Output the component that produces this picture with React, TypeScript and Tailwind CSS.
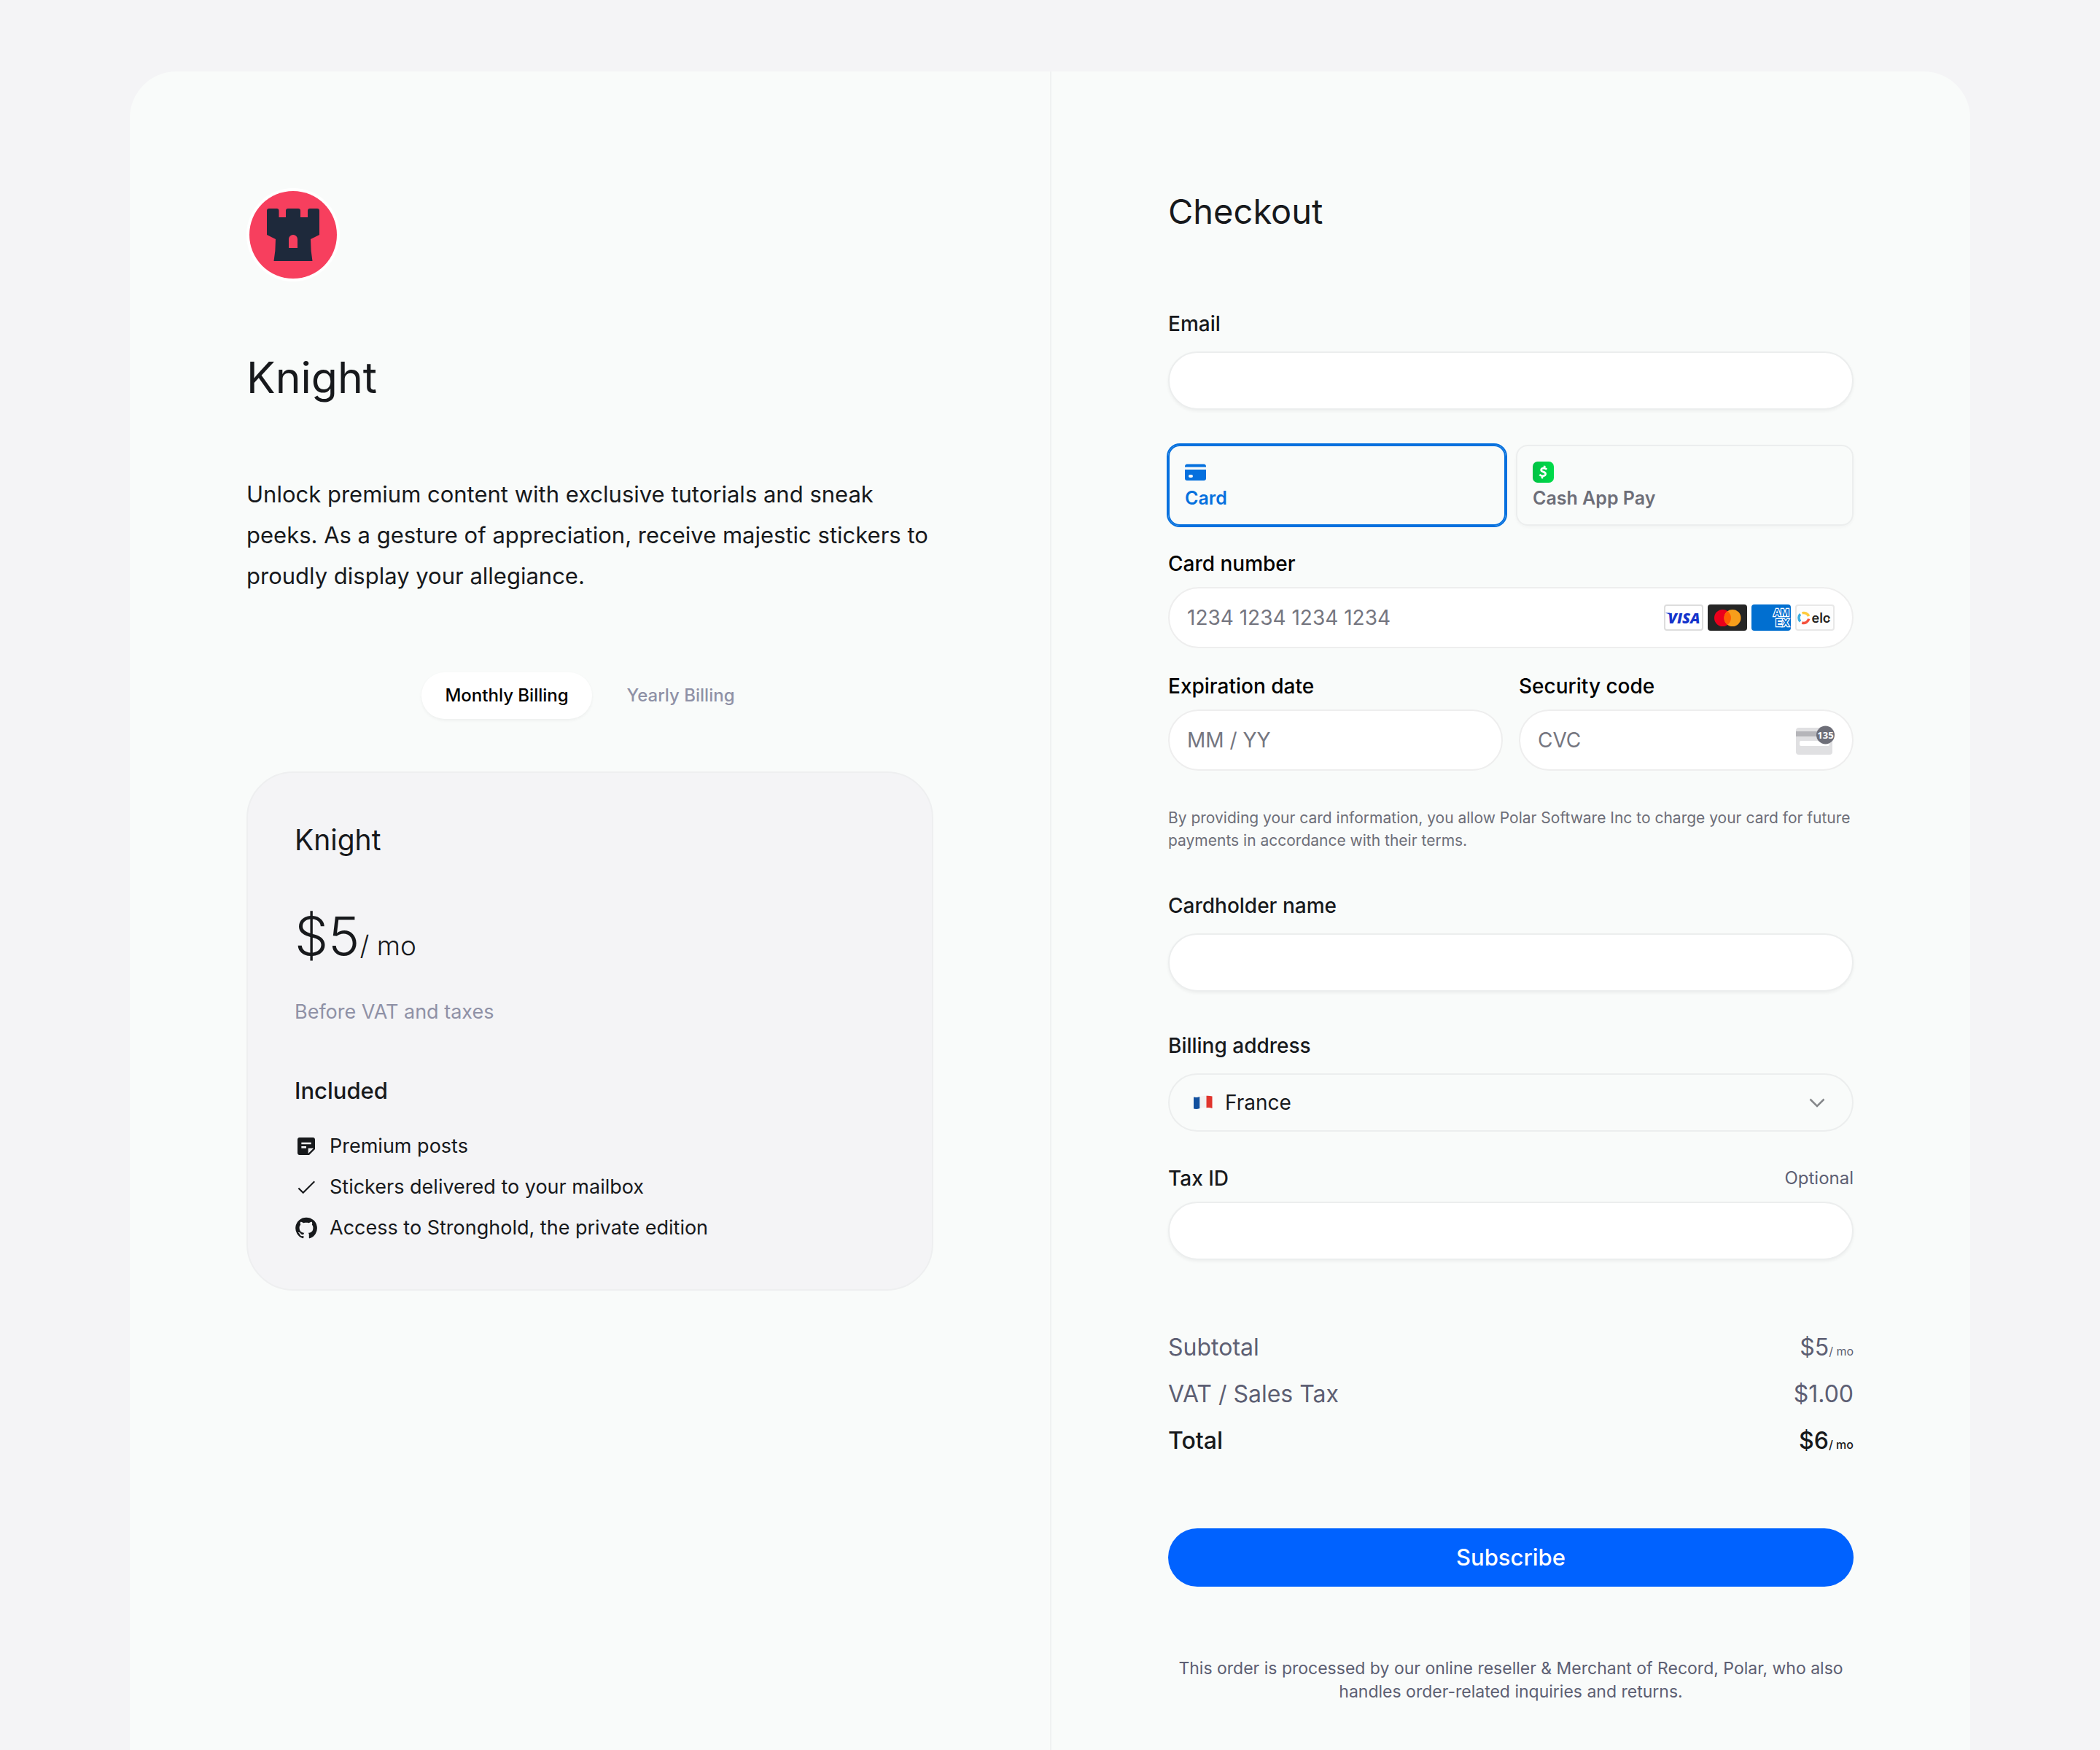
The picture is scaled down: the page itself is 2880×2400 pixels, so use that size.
import React, { useState } from "react";

const benefits = [
  {
    label: "Premium posts",
    icon: "M19 3H4.99C3.89 3 3 3.9 3 5l.01 14c0 1.1.89 2 1.99 2h10l6-6V5c0-1.1-.9-2-2-2zM7 8h10v2H7V8zm5 6H7v-2h5v2zm2 5.5V14h5.5L14 19.5z",
  },
  {
    label: "Stickers delivered to your mailbox",
    icon: "M8.800 16.700L4.600 12.500L3.450 13.650L8.800 19L21 6.800L19.900 5.600z",
  },
  {
    label: "Access to Stronghold, the private edition",
    icon: "M12 1.27a11 11 0 00-3.48 21.46c.55.09.73-.28.73-.55v-1.84c-3.03.64-3.67-1.46-3.67-1.46-.55-1.29-1.28-1.65-1.28-1.65-.92-.65.1-.65.1-.65 1.1 0 1.73 1.1 1.73 1.1.92 1.65 2.57 1.2 3.21.92a2 2 0 01.64-1.47c-2.47-.27-5.04-1.19-5.04-5.5 0-1.1.46-2.1 1.2-2.84a3.76 3.76 0 010-2.93s.91-.28 3.11 1.1c1.8-.49 3.7-.49 5.5 0 2.1-1.38 3.02-1.1 3.02-1.1a3.76 3.76 0 01.1 2.93c.83.74 1.2 1.74 1.2 2.94 0 4.21-2.57 5.13-5.04 5.4.45.37.82.92.82 2.02v3.03c0 .27.1.64.73.55A11 11 0 0012 1.27",
  },
];

const totals = [
  { label: "Subtotal", amount: "$5", per: "/ mo", className: "text-[#5d5f73]" },
  { label: "VAT / Sales Tax", amount: "$1.00", per: "", className: "text-[#5d5f73]" },
  { label: "Total", amount: "$6", per: "/ mo", className: "font-medium text-[#17191c]" },
];

function RookLogo() {
  return (
    <svg viewBox="0 0 128 128" className="size-32" role="img" aria-label="Knight logo">
      <circle cx="64" cy="64" r="64" fill="#fff" />
      <circle cx="64" cy="64" r="60" fill="#f73f5e" />
      <g transform="translate(28 28)">
        <path
          fill="#1e293b"
          fillRule="evenodd"
          d="M3 0H13.5Q16.5 0 16.5 3V12H26V3Q26 0 29 0H43Q46 0 46 3V12H56V3Q56 0 59 0H69Q72 0 72 3V36L60 42Q60 58 62.500 72H9.500Q12 58 12 42L0 36V3Q0 0 3 0ZM30 54H42V42A6 6 0 0 0 30 42Z"
        />
      </g>
    </svg>
  );
}

function VisaIcon() {
  return (
    <svg viewBox="0 0 54 36" className="h-9 w-[54px]" role="img" aria-label="Visa">
      <rect x="1" y="1" width="52" height="34" rx="3" fill="#fff" stroke="#dddddd" strokeWidth="2" />
      <text x="27.500" y="26" textAnchor="middle" fontFamily="Open Sans, sans-serif" fontWeight="800" fontStyle="italic" fontSize="20" fill="#1434cb">
        VISA
      </text>
      <path d="M2.500 11.500H8L10 16Q7 12.500 2.500 12Z" fill="#1434cb" />
    </svg>
  );
}

function MastercardIcon() {
  return (
    <svg viewBox="0 0 54 36" className="h-9 w-[54px]" role="img" aria-label="Mastercard">
      <rect width="54" height="36" rx="4" fill="#252525" />
      <circle cx="20.500" cy="18.500" r="11.500" fill="#eb001b" />
      <circle cx="34" cy="18.500" r="11.500" fill="#f79e1b" />
      <path d="M27.250 9.200a11.500 11.500 0 0 1 0 18.600a11.500 11.500 0 0 1 0-18.600z" fill="#ff5f00" />
    </svg>
  );
}

function AmexIcon() {
  return (
    <svg viewBox="0 0 54 36" className="h-9 w-[54px]" role="img" aria-label="American Express">
      <clipPath id="amex-card">
        <rect width="54" height="36" rx="4" />
      </clipPath>
      <g clipPath="url(#amex-card)">
        <rect width="54" height="36" fill="#016fd0" />
        <g fontFamily="Liberation Sans, sans-serif" fontWeight="700" fontSize="14" fill="#016fd0" stroke="#fff" strokeWidth="2.500" paintOrder="stroke">
          <text x="30" y="16">AM</text>
          <text x="33" y="30">EX</text>
        </g>
      </g>
    </svg>
  );
}

function EloIcon() {
  return (
    <svg viewBox="0 0 54 36" className="h-9 w-[54px]" role="img" aria-label="Elo">
      <rect x="1" y="1" width="52" height="34" rx="3" fill="#fdfdfd" stroke="#e8e8e8" strokeWidth="2" />
      <g fill="none" strokeWidth="3.500">
        <path d="M9.500 11.800A7.200 7.200 0 0 1 18.500 16.200" stroke="#ffcb3d" />
        <path d="M7 13.200A7.200 7.200 0 0 0 7 23.300" stroke="#3bade0" />
        <path d="M18.700 19.600A7.200 7.200 0 0 1 9.300 25" stroke="#f4513d" />
      </g>
      <text x="22.500" y="25" fontFamily="Inter, sans-serif" fontWeight="600" fontSize="18" fill="#231f20">
        elo
      </text>
      <path d="M46 19.500L51 18.500V20.500L46 21.500Z" fill="#fdfdfd" />
    </svg>
  );
}

function CvcIcon() {
  return (
    <svg viewBox="0 0 54 40" className="h-10 w-[54px]" aria-hidden="true">
      <rect x="1" y="3" width="50" height="37" rx="4" fill="#e0e0e2" />
      <rect x="1" y="8" width="50" height="7" fill="#b5b5b9" />
      <rect x="6" y="21" width="41" height="7" rx="2" fill="#fff" />
      <circle cx="41.500" cy="13" r="12.500" fill="#6d6e78" />
      <text x="41.500" y="18" textAnchor="middle" fontFamily="Open Sans, sans-serif" fontWeight="700" fontSize="13" fill="#fff">
        135
      </text>
    </svg>
  );
}

function CardIcon() {
  return (
    <svg viewBox="0 0 29 29" className="size-[29px]" fill="#0570de" aria-hidden="true">
      <path d="M0 7Q0 3.500 3 3.500H26Q29 3.500 29 7V7.500H0Z" />
      <path fillRule="evenodd" d="M0 11H29V23Q29 26 26 26H3Q0 26 0 23ZM7 18a2 2 0 0 0 0 4h2a2 2 0 0 0 0-4Z" />
    </svg>
  );
}

function CashAppIcon() {
  return (
    <svg viewBox="0 0 28 28" className="size-[29px]" aria-hidden="true">
      <linearGradient id="cash-green" x1="0" y1="0" x2="1" y2="0">
        <stop offset="0" stopColor="#00c244" />
        <stop offset="1" stopColor="#00dc4a" />
      </linearGradient>
      <rect width="28" height="28" rx="6.500" fill="url(#cash-green)" />
      <path d="M18.600 10.400C16.300 8.300 11.600 8.200 11.200 11C10.900 14.300 17.600 13 17 16.700C16.400 19.800 11.600 19.600 9 17.400M15.800 5.500L15.300 8.400M12.800 19.500L12.300 22.500" fill="none" stroke="#fff" strokeWidth="2.600" />
    </svg>
  );
}

function FlagFrance() {
  return (
    <svg viewBox="0 0 28 20" className="h-5 w-7" aria-hidden="true">
      <path d="M1 2.500Q5 3.500 9.500 2V18Q5 19.500 1 18.500Z" fill="#12509e" />
      <path d="M9.500 2Q14 .7 18.500 .7V17.200Q14 16.700 9.500 18Z" fill="#f1f1f1" />
      <path d="M18.500 .7Q23 .5 26.500 1.500V18Q23 16.700 18.500 17.200Z" fill="#e0342c" />
    </svg>
  );
}

const fieldClass = "h-20 w-full rounded-full border-2 border-[#eceeee] bg-white px-6 text-[28px] outline-none shadow-[0_2px_4px_rgba(0,0,0,0.05)]";
const cardFieldClass = "flex h-[84px] items-center rounded-full border-2 border-[#eeeeee] bg-white px-6";
const cardInputClass = "w-full min-w-0 flex-1 bg-transparent text-[28px] text-[#30313d] outline-none placeholder:text-[#757680]";

function Field({ id, label, type = "text" }: { id: string; label: string; type?: string }) {
  return (
    <div className="flex flex-col gap-6">
      <label htmlFor={id} className="text-[28px] leading-7 font-medium">
        {label}
      </label>
      <input id={id} type={type} className={fieldClass} />
    </div>
  );
}

function CardField({ id, label, placeholder, children }: { id: string; label: string; placeholder: string; children?: React.ReactNode }) {
  return (
    <div className="flex min-w-0 flex-1 flex-col gap-4">
      <label htmlFor={id} className="text-[28px] leading-8 font-medium text-black">
        {label}
      </label>
      <div className={cardFieldClass}>
        <input id={id} placeholder={placeholder} inputMode="numeric" className={cardInputClass} />
        {children}
      </div>
    </div>
  );
}

function Product() {
  const [cycle, setCycle] = useState("Monthly Billing");
  return (
    <section className="flex min-w-0 flex-col p-40 pb-16">
      <RookLogo />
      <h1 className="mt-24 text-[59px] leading-[72px]">Knight</h1>
      <p className="mt-24 text-[31px] leading-[56px]">
        Unlock premium content with exclusive tutorials and sneak peeks. As a gesture of appreciation, receive majestic stickers to proudly display your allegiance.
      </p>
      <div className="mt-24 flex justify-center gap-4 py-2">
        {["Monthly Billing", "Yearly Billing"].map((name) => (
          <button
            key={name}
            type="button"
            aria-pressed={cycle === name}
            onClick={() => setCycle(name)}
            className={
              cycle === name
                ? "h-16 rounded-full bg-white px-8 text-2xl font-medium text-black shadow-[0_2px_4px_rgba(0,0,0,0.05)]"
                : "h-16 rounded-full px-8 text-2xl font-medium text-[#8f91a6]"
            }
          >
            {name}
          </button>
        ))}
      </div>
      <div className="mt-16 flex flex-col rounded-[64px] border-2 border-[#eeeff0] bg-[#f4f4f6] p-16">
        <h2 className="text-[39px] leading-[56px]">Knight</h2>
        <p className="mt-16 text-[73px] leading-[80px] font-light">
          $5<span className="text-[37px] leading-10">/ mo</span>
        </p>
        <p className="mt-11 text-[27px] leading-10 text-[#8f91a6]">Before VAT and taxes</p>
        <h3 className="mt-16 text-[31px] leading-[48px] font-medium">Included</h3>
        <ul className="mt-8 flex flex-col gap-4">
          {benefits.map((b) => (
            <li key={b.label} className="flex items-center gap-4 text-[27px] leading-10">
              <svg viewBox="0 0 24 24" className="size-8" fill="currentColor" aria-hidden="true">
                <path d={b.icon} />
              </svg>
              {b.label}
            </li>
          ))}
        </ul>
      </div>
    </section>
  );
}

function Checkout() {
  const [method, setMethod] = useState("Card");
  const methods = [
    { name: "Card", icon: <CardIcon /> },
    { name: "Cash App Pay", icon: <CashAppIcon /> },
  ];
  return (
    <section className="flex min-w-0 flex-col border-l-2 border-[#f0f2f2] p-40 pb-16">
      <h2 className="text-[47px] leading-[64px]">Checkout</h2>
      <form className="mt-[108px] flex flex-col" onSubmit={(e) => e.preventDefault()}>
        <Field id="email" label="Email" type="email" />
        <div className="mt-12 grid grid-cols-2 gap-[14px]">
          {methods.map((m) => (
            <button
              key={m.name}
              type="button"
              aria-pressed={method === m.name}
              onClick={() => setMethod(m.name)}
              className={
                method === m.name
                  ? "flex h-[111px] flex-col items-start gap-[5px] rounded-2xl border-2 border-[#0570de] px-[21px] pt-[21px] text-[25px] leading-8 font-semibold text-[#0570de] ring-2 ring-[#0570de]"
                  : "flex h-[111px] flex-col items-start gap-[5px] rounded-2xl border-2 border-[#eceeee] px-[21px] pt-[21px] text-[25px] leading-8 font-semibold text-[#6d6e78] shadow-[0_2px_4px_rgba(0,0,0,0.03)]"
              }
            >
              {m.icon}
              {m.name}
            </button>
          ))}
        </div>
        <div className="mt-9 flex">
          <CardField id="number" label="Card number" placeholder="1234 1234 1234 1234">
            <div className="flex gap-[6px]">
              <VisaIcon />
              <MastercardIcon />
              <AmexIcon />
              <EloIcon />
            </div>
          </CardField>
        </div>
        <div className="mt-9 flex gap-[22px]">
          <CardField id="expiry" label="Expiration date" placeholder="MM / YY" />
          <CardField id="cvc" label="Security code" placeholder="CVC">
            <CvcIcon />
          </CardField>
        </div>
        <p className="mt-[49px] mb-[60px] text-[21px] leading-[31px] text-[#6d6e78]">
          By providing your card information, you allow Polar Software Inc to charge your card for future payments in accordance with their terms.
        </p>
        <Field id="holder" label="Cardholder name" />
        <div className="mt-[60px] flex flex-col gap-6">
          <label htmlFor="country" className="text-[28px] leading-7 font-medium">
            Billing address
          </label>
          <div className="relative">
            <select id="country" className="h-20 w-full appearance-none rounded-full border-2 border-[#eceeee] bg-transparent pr-20 pl-[76px] text-[28px] outline-none">
              <option>France</option>
            </select>
            <div className="pointer-events-none absolute inset-0 flex items-center justify-between pr-[38px] pl-[34px]">
              <FlagFrance />
              <svg viewBox="0 0 24 24" className="size-6" fill="none" stroke="#85878a" strokeWidth="2.500" aria-hidden="true">
                <path d="M2.500 7.500L12 17L21.500 7.500" />
              </svg>
            </div>
          </div>
        </div>
        <div className="mt-12 flex flex-col gap-4">
          <div className="flex items-center justify-between leading-8">
            <label htmlFor="tax" className="text-[28px] font-medium">
              Tax ID
            </label>
            <span className="text-2xl leading-8 text-[#5d5f73]">Optional</span>
          </div>
          <input id="tax" className={fieldClass} />
        </div>
        <dl className="mt-24 flex flex-col gap-4">
          {totals.map((t) => (
            <div key={t.label} className={t.className}>
              <div className="flex items-baseline justify-between text-[32px] leading-[48px]">
                <dt>{t.label}</dt>
                <dd>
                  {t.amount}
                  <span className="text-base">{t.per}</span>
                </dd>
              </div>
            </div>
          ))}
        </dl>
        <button type="submit" className="mt-24 h-20 rounded-full bg-[#0062ff] text-[31px] font-medium text-white">
          Subscribe
        </button>
      </form>
      <p className="mt-24 text-center text-[23px] leading-8 text-[#5d5f73]">
        This order is processed by our online reseller &amp; Merchant of Record, Polar, who also handles order-related inquiries and returns.
      </p>
    </section>
  );
}

export default function App() {
  return (
    <main className="flex min-h-screen flex-col bg-[#f4f4f6] px-[178px] pt-[98px] font-['Inter',sans-serif] text-[#17191c]">
      <div className="grid flex-1 grid-cols-2 rounded-t-[64px] bg-[#f9fbfa]">
        <Product />
        <Checkout />
      </div>
    </main>
  );
}
